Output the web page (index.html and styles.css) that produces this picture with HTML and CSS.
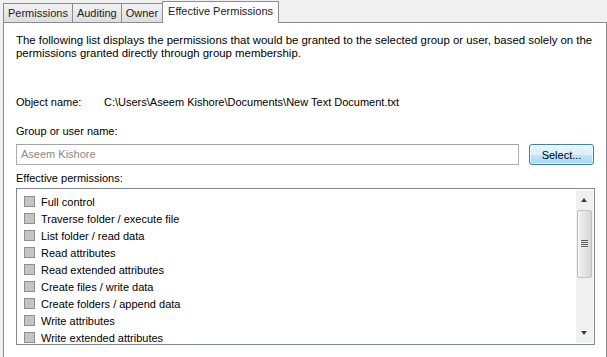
FILE: index.html
```html
<!DOCTYPE html>
<html lang="en">
<head>
    <meta charset="UTF-8">
    <title>Effective Permissions</title>
    <link rel="stylesheet" href="styles.css">
</head>
<body>
    <nav class="tabs">
        <div class="tab">Permissions</div>
        <div class="tab">Auditing</div>
        <div class="tab">Owner</div>
        <div class="tab tab-active">Effective Permissions</div>
    </nav>
    <main class="panel">
        <p class="intro">The following list displays the permissions that would be granted to the selected group or user, based solely on the permissions granted directly through group membership.</p>

        <div class="object-row">
            <span class="object-label">Object name:</span>
            <span>C:\Users\Aseem Kishore\Documents\New Text Document.txt</span>
        </div>

        <div class="field-label">Group or user name:</div>
        <div class="user-row">
            <div class="user-input">Aseem Kishore</div>
            <button class="select-btn">Select...</button>
        </div>

        <div class="field-label field-label-tight">Effective permissions:</div>
        <div class="perm-list">
            <ul class="perm-items">
                <li><span class="check"></span>Full control</li>
                <li><span class="check"></span>Traverse folder / execute file</li>
                <li><span class="check"></span>List folder / read data</li>
                <li><span class="check"></span>Read attributes</li>
                <li><span class="check"></span>Read extended attributes</li>
                <li><span class="check"></span>Create files / write data</li>
                <li><span class="check"></span>Create folders / append data</li>
                <li><span class="check"></span>Write attributes</li>
                <li><span class="check"></span>Write extended attributes</li>
            </ul>
            <div class="scrollbar">
                <div class="arrow arrow-up"></div>
                <div class="thumb">
                    <div class="grip"></div>
                </div>
                <div class="track"></div>
                <div class="arrow arrow-down"></div>
            </div>
        </div>
    </main>
</body>
</html>
```

FILE: styles.css
```css
*{
    box-sizing: border-box;
}
body{
    margin: 0;
    background-color: #f0f0f0;
    color: #000;
    font-family: "Liberation Sans", Arial, sans-serif;
    font-size: 11px;
    height: 357px;
    overflow: hidden;
}

.tabs{
    display: flex;
    align-items: flex-end;
    padding-left: 3px;
    height: 22px;
}

.tab{
    height: 19px;
    padding: 3px 4px 0 4px;
    background: linear-gradient(#f2f2f2, #dedede);
    border: 1px solid #898c95;
    border-bottom: none;
    margin-right: -1px;
    color: #222;
}

.tab-active{
    position: relative;
    height: 22px;
    padding: 3px 5px 0 5px;
    background: #fff;
    margin-bottom: -1px;
    z-index: 1;
}

.panel{
    margin-left: 3px;
    width: 604px;
    height: 340px;
    background: #fff;
    border: 1px solid #898c95;
    border-bottom: none;
    padding: 11px 11px 0 12px;
}

.intro{
    margin: 0;
    font-size: 11.4px;
    line-height: 13px;
    width: 584px;
}

.object-row{
    display: flex;
    margin-top: 35px;
    line-height: 14px;
}

.object-label{
    width: 88px;
}

.field-label{
    margin-top: 15px;
    line-height: 14px;
}

.field-label-tight{
    margin-top: 6px;
}

.user-row{
    display: flex;
    align-items: center;
    margin-top: 6px;
}

.user-input{
    width: 503px;
    height: 21px;
    border: 1px solid #abadb3;
    border-top-color: #a3a3a3;
    padding: 3px 4px;
    color: #8a8a8a;
}

.select-btn{
    margin-left: 10px;
    width: 65px;
    height: 21px;
    border: 1px solid #3c7fb1;
    border-radius: 3px;
    background: linear-gradient(#eaf6fd 0%, #d9f0fc 50%, #bee6fd 51%, #a7d9f5 100%);
    font-family: inherit;
    font-size: 11px;
    color: #000;
    padding: 0;
    box-shadow: inset 0 0 0 1px rgba(255, 255, 255, 0.6);
}

.perm-list{
    display: flex;
    width: 579px;
    height: 157px;
    margin-top: 3px;
    border: 1px solid #828790;
    overflow: hidden;
}

.perm-items{
    flex: 1;
    list-style: none;
    margin: 0;
    padding: 4px 0 0 7px;
}

.perm-items li{
    display: flex;
    align-items: center;
    height: 17px;
}

.check{
    width: 11px;
    height: 11px;
    margin-right: 6px;
    background: #c4c4c4;
    border: 1px solid #8e8f8f;
}

.scrollbar{
    display: flex;
    flex-direction: column;
    width: 17px;
    margin: 1px 1px 1px 0;
    background: #f0f0f0;
}

.arrow{
    height: 20px;
    position: relative;
}

.arrow::after{
    content: "";
    position: absolute;
    left: 5px;
    border-left: 3px solid transparent;
    border-right: 3px solid transparent;
}

.arrow-up::after{
    top: 8px;
    border-bottom: 4px solid #3b3b3b;
}

.arrow-down::after{
    top: 8px;
    border-top: 4px solid #3b3b3b;
}

.thumb{
    height: 68px;
    margin: 0 1px;
    border: 1px solid #c0c0c0;
    border-radius: 2px;
    background: linear-gradient(to right, #f4f4f4, #e4e4e4 50%, #d6d6d6);
    display: flex;
    align-items: center;
    justify-content: center;
}

.grip{
    width: 7px;
    height: 8px;
    background: repeating-linear-gradient(#555 0 1px, #eee 1px 2px);
}

.track{
    flex: 1;
}
```
